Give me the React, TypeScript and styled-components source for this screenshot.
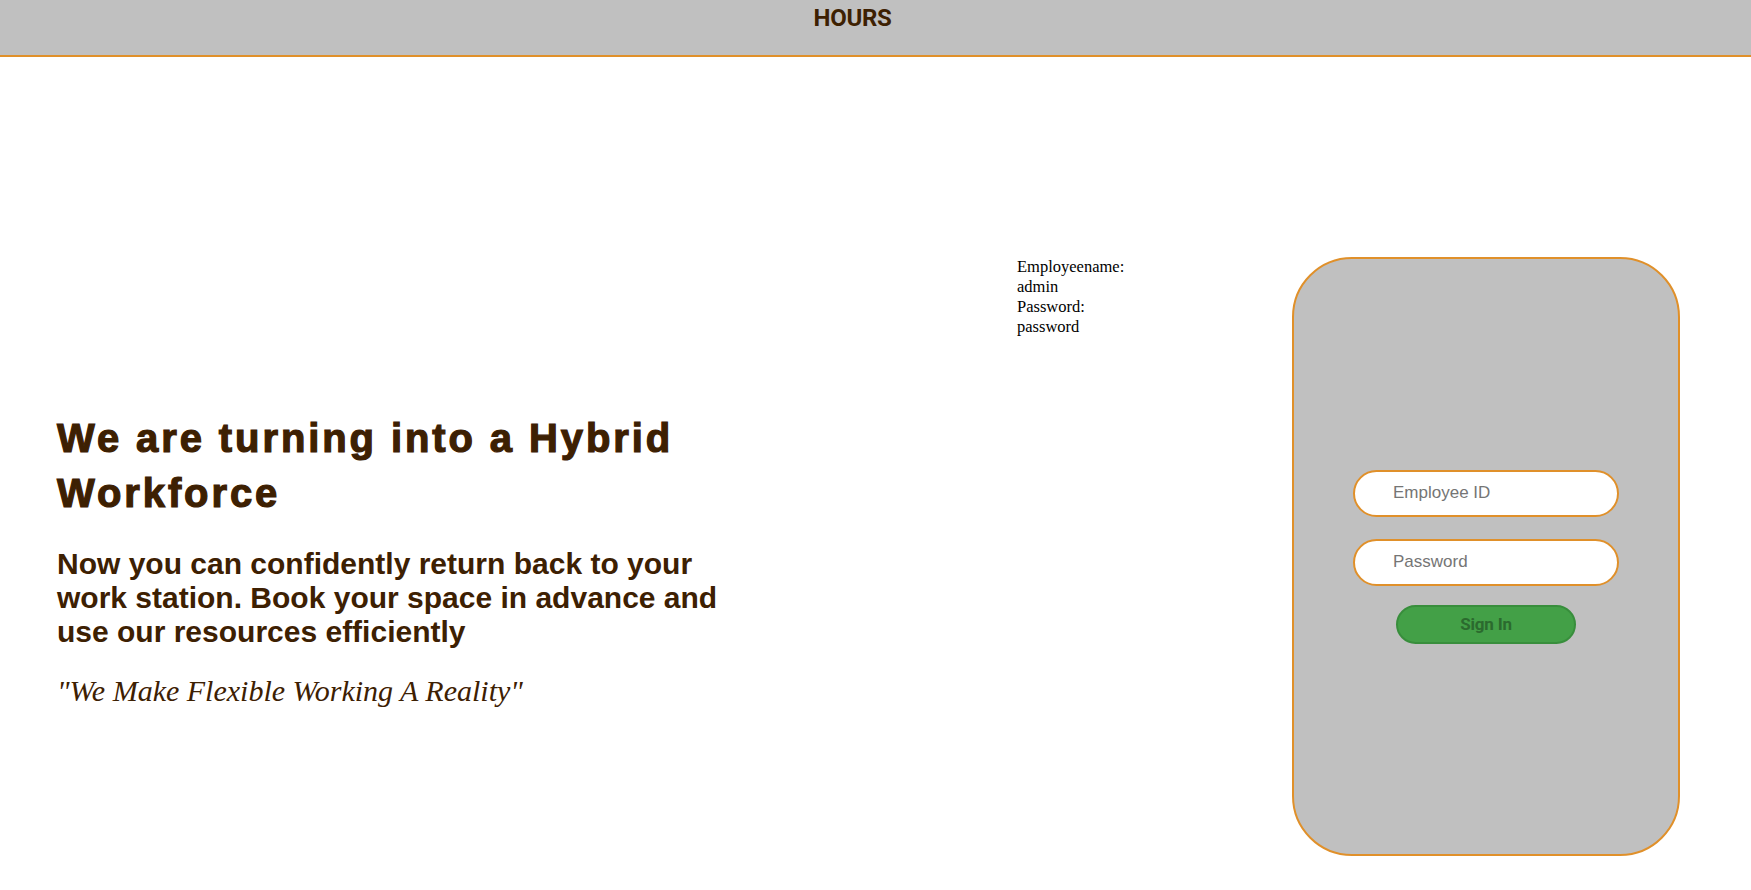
import React from "react";
import styled, { createGlobalStyle } from "styled-components";

const GlobalStyle = createGlobalStyle`
  html, body {
    margin: 0;
    padding: 0;
    background: #ffffff;
  }
  * { box-sizing: border-box; }
`;

const Page = styled.div`
  width: 100%;
  min-height: 890px;
  background: #ffffff;
`;

const Header = styled.header`
  height: 57px;
  background: #c0c0c0;
  border-bottom: 2px solid #e0902a;
  display: flex;
  justify-content: center;
  align-items: flex-start;
  padding-right: 46px;
`;

const Brand = styled.div`
  font-family: Roboto, "Liberation Sans", sans-serif;
  font-weight: 700;
  font-size: 24px;
  line-height: 28px;
  padding-top: 4px;
  color: #3d2002;
  letter-spacing: -0.3px;
`;

const Main = styled.main`
  display: flex;
  align-items: center;
  padding: 200px 71px 0 57px;
`;

const Intro = styled.section`
  width: 690px;
  flex: 0 0 auto;
  padding-top: 6px;
  color: #3d2002;
`;

const Heading = styled.h1`
  margin: 0;
  font-family: "Liberation Sans", Arial, sans-serif;
  font-weight: 700;
  font-size: 40px;
  line-height: 55px;
  letter-spacing: 2.9px;
  -webkit-text-stroke: 1.2px #3d2002;
`;

const Lead = styled.p`
  margin: 26px 0 0;
  font-family: "Liberation Sans", Arial, sans-serif;
  font-weight: 700;
  font-size: 30px;
  line-height: normal;
`;

const Quote = styled.p`
  margin: 25px 0 0;
  font-family: "Liberation Serif", "Times New Roman", serif;
  font-style: italic;
  font-size: 30px;
  line-height: normal;
`;

const Side = styled.div`
  flex: 1 1 auto;
  display: flex;
  align-items: flex-start;
  justify-content: space-between;
  padding-left: 270px;
`;

const Credentials = styled.div`
  font-family: "Liberation Serif", "Times New Roman", serif;
  font-size: 16.5px;
  line-height: 20px;
  color: #000000;
`;

const Card = styled.div`
  width: 388px;
  height: 599px;
  background: #c0c0c0;
  border: 2px solid #e0902a;
  border-radius: 60px;
  display: flex;
  flex-direction: column;
  align-items: center;
  justify-content: center;
`;

const Form = styled.form`
  display: flex;
  flex-direction: column;
  align-items: center;
`;

const Field = styled.input<{ $gap?: number }>`
  width: 266px;
  height: 47px;
  margin-bottom: ${(p) => p.$gap ?? 0}px;
  border: 2px solid #e0902a;
  border-radius: 24px;
  background: #ffffff;
  padding: 0 0 0 38px;
  font-family: "Liberation Sans", Arial, sans-serif;
  font-size: 17px;
  color: #333;
  outline: none;
  &::placeholder {
    color: #757575;
  }
`;

const SignIn = styled.button`
  width: 180px;
  height: 39px;
  background: #43a047;
  border: 2px solid #388e3c;
  border-radius: 20px;
  font-family: Roboto, "Liberation Sans", sans-serif;
  font-weight: 700;
  font-size: 17px;
  letter-spacing: -0.2px;
  color: #2b6a2e;
  cursor: pointer;
  padding: 0;
`;

export default function App() {
  return (
    <Page>
      <GlobalStyle />
      <Header>
        <Brand>HOURS</Brand>
      </Header>
      <Main>
        <Intro>
          <Heading>We are turning into a Hybrid Workforce</Heading>
          <Lead>
            Now you can confidently return back to your work station. Book your
            space in advance and use our resources efficiently
          </Lead>
          <Quote>"We Make Flexible Working A Reality"</Quote>
        </Intro>
        <Side>
          <Credentials>
            Employeename:
            <br />
            admin
            <br />
            Password:
            <br />
            password
          </Credentials>
          <Card>
            <Form onSubmit={(e) => e.preventDefault()}>
              <Field placeholder="Employee ID" $gap={22} />
              <Field type="password" placeholder="Password" $gap={19} />
              <SignIn type="submit">Sign In</SignIn>
            </Form>
          </Card>
        </Side>
      </Main>
    </Page>
  );
}
